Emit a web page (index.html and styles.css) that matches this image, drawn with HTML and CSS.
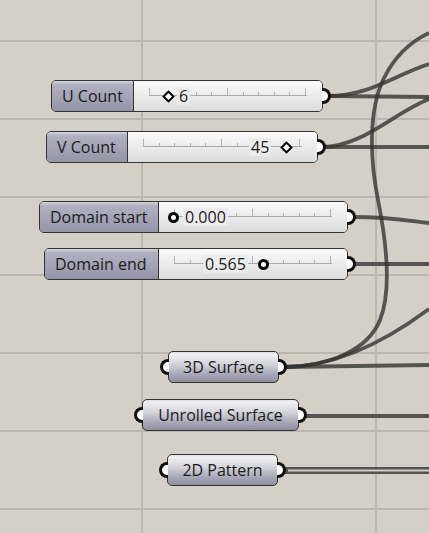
FILE: index.html
```html
<!DOCTYPE html>
<html lang="en">
<head>
<meta charset="utf-8">
<title>Canvas</title>
<link rel="stylesheet" href="styles.css">
</head>
<body>
<div class="canvas">
  <svg class="wires" width="429" height="533" viewBox="0 0 429 533">
    <path d="M327 96 C370 96 392 76 429 64"/>
    <path d="M327 96 L429 97"/>
    <path d="M322 147 C362 147 392 114 429 99"/>
    <path d="M322 147 L429 147"/>
    <path d="M352 217 C392 217 410 221 429 223"/>
    <path d="M352 264 L429 264"/>
    <path d="M284 367 C330 366 368 350 380 320 C392 290 386 240 378 200 C370 160 368 110 384 78 C395 56 410 42 429 33"/>
    <path d="M284 367 C332 367 382 344 429 309"/>
    <path d="M284 367 L429 365"/>
    <path d="M302 416 L429 416"/>
    <path class="tree" d="M282 470.5 L429 470.5"/>
    <path class="tree-in" d="M288 470.5 L429 470.5"/>
  </svg>

  <div class="node slider n-ucount">
    <div class="label">U Count</div>
    <div class="track">
      <div class="rail"></div>
      <span class="knob diamond" style="left:34px"></span>
      <span class="value" style="left:43px">6</span>
    </div>
    <span class="grip out"></span>
  </div>

  <div class="node slider n-vcount">
    <div class="label">V Count</div>
    <div class="track">
      <div class="rail"></div>
      <span class="value" style="left:121px">45</span>
      <span class="knob diamond" style="left:158px"></span>
    </div>
    <span class="grip out"></span>
  </div>

  <div class="node slider n-dstart">
    <div class="label">Domain start</div>
    <div class="track">
      <div class="rail"></div>
      <span class="knob circle" style="left:14px"></span>
      <span class="value" style="left:24px">0.000</span>
    </div>
    <span class="grip out"></span>
  </div>

  <div class="node slider n-dend">
    <div class="label">Domain end</div>
    <div class="track">
      <div class="rail"></div>
      <span class="value" style="left:44px">0.565</span>
      <span class="knob circle" style="left:104px"></span>
    </div>
    <span class="grip out"></span>
  </div>

  <div class="node param n-3d">
    <span class="grip in"></span>
    <div class="name">3D Surface</div>
    <span class="grip out"></span>
  </div>

  <div class="node param n-unrolled">
    <span class="grip in"></span>
    <div class="name">Unrolled Surface</div>
    <span class="grip out"></span>
  </div>

  <div class="node param n-2d">
    <span class="grip in"></span>
    <div class="name">2D Pattern</div>
    <span class="grip out"></span>
  </div>
</div>
</body>
</html>
```

FILE: styles.css
```css
body {margin:0; padding:0; background:#d4d0c8;}

.canvas {
    position: relative;
    width: 429px;
    height: 533px;
    overflow: hidden;
    background-color: #d4d0c8;
    background-image:
        linear-gradient(to right, #bbb7b0 2px, transparent 2px),
        linear-gradient(to bottom, #bbb7b0 2px, transparent 2px);
    background-size: 234px 78px;
    background-position: 141px 40px;
    font: normal 16px/1 "Open Sans", "Noto Sans", sans-serif;
    color: #1c1c1c;
}

.wires {position:absolute; left:0; top:0;}
.wires path {fill:none; stroke:#363432; stroke-opacity:.8; stroke-width:3.8;}
.wires path.tree {stroke-width:7; stroke-opacity:.8;}
.wires path.tree-in {stroke:#d4d0c8; stroke-opacity:1; stroke-width:2;}

/* nodes */
.node {
    position: absolute;
    height: 30px;
    border: 1px solid #333;
    border-radius: 5px;
    box-sizing: content-box;
    display: flex;
}
.n-ucount {left:51px; top:80px; width:270px;}
.n-vcount {left:46px; top:131px; width:270px;}
.n-dstart {left:39px; top:201px; width:307px;}
.n-dend {left:44px; top:248px; width:302px;}
.n-3d {left:168px; top:351px; width:109px;}
.n-unrolled {left:142px; top:399px; width:155px;}
.n-2d {left:167px; top:454px; width:109px;}

.slider .label {
    display: flex;
    align-items: center;
    padding: 0 10px;
    border-right: 1px solid #333;
    border-radius: 4px 0 0 4px;
    background: linear-gradient(#d6d6de 0, #b0b0c0 12%, #a3a3b5 55%, #9494a6 100%);
}
.n-ucount .label {width:61px;}
.n-vcount .label {width:60px;}
.n-dstart .label {width:98px;}
.n-dend .label {width:93px;}

.slider .track {
    position: relative;
    flex: 1;
    border-radius: 0 4px 4px 0;
    background: linear-gradient(#fbfbfb 0, #eeeeee 40%, #dcdcdc 100%);
}
.rail {
    position: absolute;
    left: 15px;
    right: 15px;
    top: 7px;
    height: 8px;
    background:
        linear-gradient(#ababab, #ababab) 0 100% / 100% 1px no-repeat,
        repeating-linear-gradient(to right, #b3b3b3 0 1px, transparent 1px 78px) 0 0 / 100% 100% no-repeat,
        repeating-linear-gradient(to right, #b3b3b3 0 1px, transparent 1px 15.6px) 0 100% / 100% 4px no-repeat;
}
.knob {
    position: absolute;
    top: 15px;
    box-sizing: border-box;
    background: #fff;
    border: 2.5px solid #000;
}
.knob.diamond {
    width: 9px;
    height: 9px;
    margin: -4.5px 0 0 -4.5px;
    transform: rotate(45deg);
}
.knob.circle {
    width: 11px;
    height: 11px;
    margin: -5.5px 0 0 -5.5px;
    border-width: 3px;
    border-radius: 50%;
}
.value {
    position: absolute;
    top: 6px;
    padding: 0 2px;
    background: #ececec;
    line-height: 18px;
}

/* params */
.param {
    justify-content: center;
    align-items: center;
    background: linear-gradient(#e2e2e6 0, #f0f0f2 8%, #d4d4dc 40%, #a6a6b6 75%, #8e8ea0 100%);
}

.grip {
    position: absolute;
    top: 50%;
    width: 6px;
    height: 10px;
    margin-top: -8px;
    background: #fff;
    border: 3px solid #111;
}
.grip.out {
    right: -9px;
    border-left: 0;
    border-radius: 0 8px 8px 0;
}
.grip.in {
    left: -9px;
    border-right: 0;
    border-radius: 8px 0 0 8px;
}
```
